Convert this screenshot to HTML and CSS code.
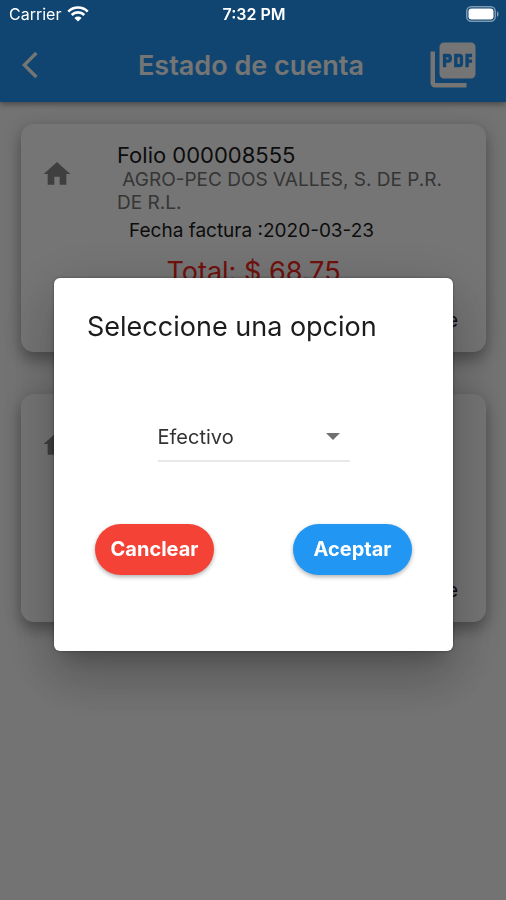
FILE: index.html
```html
<!DOCTYPE html>
<html lang="es">
<head>
<meta charset="utf-8">
<meta name="viewport" content="width=device-width, initial-scale=1">
<title>Estado de cuenta</title>
<link rel="stylesheet" href="styles.css">
</head>
<body>
<div class="status">
  <span class="carrier">Carrier
    <svg class="wifi" viewBox="0 0 22 16" aria-hidden="true"><path d="M1.300 5.600a13.700 13.700 0 0 1 19.400 0M4.700 9a8.900 8.900 0 0 1 12.600 0" fill="none" stroke="currentColor" stroke-width="2.600"/><path d="M11 15.600l-3.600-3.700a5.200 5.200 0 0 1 7.200 0z" fill="currentColor"/></svg>
  </span>
  <span class="clock">7:32 PM</span>
  <svg class="battery" viewBox="0 0 33 16" aria-hidden="true"><rect x=".75" y=".75" width="28.500" height="14.500" rx="4.500" fill="none" stroke="#fff" stroke-opacity=".45" stroke-width="1.500"/><rect x="2.500" y="2.500" width="25" height="11" rx="3" fill="#fff"/><path d="M31 5.200c2 .8 2 4.800 0 5.600z" fill="#fff" fill-opacity=".5"/></svg>
</div>

<header class="appbar">
  <button class="icon-button" type="button" aria-label="Atrás"><svg class="back" viewBox="0 0 24 24"><path d="M11.670 3.870L9.900 2.100 0 12l9.900 9.900 1.770-1.770L3.540 12z"/></svg></button>
  <h1>Estado de cuenta</h1>
  <button class="icon-button" type="button" aria-label="PDF"><svg class="pdf" viewBox="0 0 24 24"><path d="M20 2H8c-1.100 0-2 .9-2 2v12c0 1.100.9 2 2 2h12c1.100 0 2-.9 2-2V4c0-1.100-.9-2-2-2zm-8.500 7.500c0 .83-.67 1.500-1.500 1.500H9v2H7.500V7H10c.83 0 1.500.67 1.500 1.500v1zm5 2c0 .83-.67 1.500-1.500 1.500h-2.500V7H15c.83 0 1.500.67 1.500 1.500v3zm4-3H19v1h1.500V11H19v2h-1.500V7h3v1.500zM9 9.500h1v-1H9v1zM4 6H2v14c0 1.100.9 2 2 2h14v-2H4V6zm10 5.500h1v-3h-1v3z"/></svg></button>
</header>

<main class="list">
  <article class="card">
    <div class="row">
      <svg class="home" viewBox="0 0 24 24" aria-hidden="true"><path d="M10 20v-6h4v6h5v-8h3L12 3 2 12h3v8z"/></svg>
      <div class="info">
        <h2>Folio 000008555</h2>
        <p class="client">&nbsp;AGRO-PEC DOS VALLES, S. DE P.R. DE R.L.</p>
        <p class="date">Fecha factura :2020-03-23</p>
      </div>
    </div>
    <p class="total">Total: $ 68.75</p>
    <p class="more">e</p>
  </article>
  <article class="card">
    <div class="row">
      <svg class="home" viewBox="0 0 24 24" aria-hidden="true"><path d="M10 20v-6h4v6h5v-8h3L12 3 2 12h3v8z"/></svg>
    </div>
    <p class="more">e</p>
  </article>
</main>

<div class="scrim">
  <form class="dialog" role="dialog" aria-modal="true" aria-labelledby="dialog-title">
    <h2 class="dialog-title" id="dialog-title">Seleccione una opcion</h2>
    <div class="field">
      <select aria-labelledby="dialog-title"><option>Efectivo</option></select>
      <svg class="caret" viewBox="0 0 14 7" aria-hidden="true"><path d="M0 0h14L7 7z"/></svg>
    </div>
    <div class="actions">
      <button class="pill cancel" type="button">Canclear</button>
      <button class="pill accept" type="button">Aceptar</button>
    </div>
  </form>
</div>
</body>
</html>
```
FILE: styles.css
```css
:root {
  --status-height: 28px;
}

* {
  box-sizing: border-box;
}

body {
  margin: 0;
  min-height: 100vh;
  background: #fafafa;
  color: #1c1c1c;
  font-family: Inter, "Liberation Sans", sans-serif;
}

h1, h2, p {
  margin: 0;
  font-weight: 400;
}

button {
  border: 0;
  font: inherit;
}

svg {
  display: block;
  fill: currentColor;
}

/* Status bar stays above the scrim */
.status {
  position: fixed;
  inset: 0 0 auto;
  z-index: 3;
  display: grid;
  grid-template-columns: 1fr auto 1fr;
  align-items: center;
  height: var(--status-height);
  padding: 0 7px 0 9px;
  color: #fff;
  font-size: 16px;
}

.carrier {
  display: flex;
  align-items: center;
  gap: 6px;
}

.clock {
  font-weight: 600;
}

.wifi {
  width: 22px;
  height: 16px;
}

.battery {
  width: 33px;
  height: 16px;
  justify-self: end;
}

.appbar {
  display: flex;
  align-items: center;
  justify-content: space-between;
  height: 102px;
  padding: var(--status-height) 26px 0 22px;
  background: #2196f3;
  color: #fff;
  box-shadow: 0 2px 6px rgba(0, 0, 0, .4);
}

.appbar h1 {
  font-size: 27px;
  font-weight: 600;
}

.icon-button {
  display: flex;
  align-items: center;
  width: 54px;
  padding: 0;
  background: none;
  color: inherit;
}

.back {
  width: 32px;
  height: 32px;
}

.pdf {
  width: 54px;
  height: 54px;
}

.list {
  display: grid;
  gap: 42px;
  padding: 22px 20px 22px 21px;
}

.card {
  display: flex;
  flex-direction: column;
  min-height: 228px;
  padding: 18px 28px 18px 20px;
  border-radius: 13px;
  background: #fff;
  box-shadow: 0 8px 14px rgba(0, 0, 0, .26), 0 2px 20px rgba(0, 0, 0, .14);
}

.row {
  display: flex;
  gap: 44px;
}

.home {
  flex: none;
  width: 32px;
  height: 32px;
  margin-top: 16px;
  color: #8a8a8a;
}

.info h2 {
  font-size: 22px;
  line-height: 26px;
}

.client {
  color: #757575;
  font-size: 19px;
  line-height: 23px;
}

.date {
  margin-top: 4px;
  padding-left: 12px;
  font-size: 19px;
  line-height: 26px;
}

.total {
  margin-top: 12px;
  padding-left: 8px;
  color: #f4261c;
  font-size: 27px;
  line-height: 32px;
  text-align: center;
}

.more {
  margin-top: auto;
  font-size: 19px;
  line-height: 26px;
  text-align: right;
}

.scrim {
  position: fixed;
  inset: 0;
  z-index: 2;
  display: flex;
  align-items: center;
  padding: var(--status-height) 53px 0 54px;
  background: rgba(0, 0, 0, .54);
}

.dialog {
  flex: 1;
  padding: 32px 33px 76px;
  border-radius: 6px;
  background: #fff;
  box-shadow: 0 14px 20px -9px rgba(0, 0, 0, .2), 0 28px 50px 4px rgba(0, 0, 0, .14), 0 12px 60px 10px rgba(0, 0, 0, .12), 0 0 3px rgba(0, 0, 0, .4);
}

.dialog-title {
  font-size: 27px;
  line-height: 34px;
}

.field {
  display: flex;
  align-items: center;
  width: 192px;
  margin: 70px auto 0;
  border-bottom: 2px solid #e8e8e8;
}

.field select {
  flex: 1;
  height: 46px;
  padding: 0;
  border: 0;
  appearance: none;
  background: none;
  color: #333;
  font: inherit;
  font-size: 20px;
}

.caret {
  width: 14px;
  height: 7px;
  margin-right: 10px;
  color: #707070;
  pointer-events: none;
}

.actions {
  display: flex;
  justify-content: space-between;
  padding: 0 8px;
  margin-top: 62px;
}

.pill {
  width: 119px;
  height: 51px;
  padding: 0;
  border-radius: 26px;
  color: #fff;
  font-size: 20px;
  font-weight: 700;
  box-shadow: 0 2px 4px rgba(0, 0, 0, .3);
}

.cancel {
  background: #f44336;
}

.accept {
  background: #2196f3;
}
```
